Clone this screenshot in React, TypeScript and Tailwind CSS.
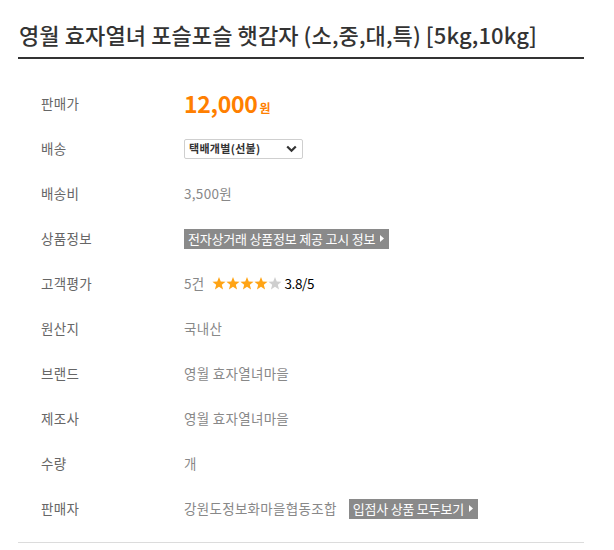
import React from 'react';

const font = { fontFamily: '"Noto Sans CJK KR", "Noto Sans", sans-serif' };

function Caret() {
  return (
    <svg className="ml-[5px] h-[7px] w-[4px]" viewBox="0 0 4 7" fill="white">
      <path d="M0 0 L4 3.5 L0 7 Z" />
    </svg>
  );
}

function Star({ on }: { on: boolean }) {
  return (
    <svg className="h-[13px] w-[14px]" viewBox="0 0 24 23" fill={on ? '#ffa415' : '#cfcfcf'}>
      <path d="M12 0 L15.1 8 L23.6 8.4 L17 13.8 L19.2 22.1 L12 17.4 L4.8 22.1 L7 13.8 L0.4 8.4 L8.9 8 Z" />
    </svg>
  );
}

function Badge({ label }: { label: string }) {
  return (
    <span className="inline-flex h-[20px] items-center bg-[#8a8a8a] pl-[4px] pr-[5px] text-[13px] tracking-[-0.2px] text-white">
      {label}
      <Caret />
    </span>
  );
}

export default function App() {
  const rows: { label: string; value: React.ReactNode }[] = [
    {
      label: '판매가',
      value: (
        <span className="flex items-baseline font-bold tracking-[-0.3px] text-[#ff7f00]">
          <span className="text-[23px]">12,000</span>
          <span className="ml-[2px] text-[12px]">원</span>
        </span>
      ),
    },
    {
      label: '배송',
      value: (
        <div className="flex h-[20px] w-[119px] items-center justify-between rounded-[2px] border border-[#cfcfcf] pl-[4px] pr-[5px]">
          <span className="text-[11px] font-bold tracking-[0.3px] text-[#333]">택배개별(선불)</span>
          <svg className="h-[8px] w-[11px]" viewBox="0 0 11 8" fill="none" stroke="#333" strokeWidth="2.2">
            <path d="M1.2 1.5 L5.5 5.8 L9.8 1.5" />
          </svg>
        </div>
      ),
    },
    { label: '배송비', value: '3,500원' },
    { label: '상품정보', value: <Badge label="전자상거래 상품정보 제공 고시 정보" /> },
    {
      label: '고객평가',
      value: (
        <span className="flex items-center">
          <span>5건</span>
          <span className="ml-[7px] flex">
            {[0, 1, 2, 3, 4].map((i) => (
              <Star key={i} on={i < 4} />
            ))}
          </span>
          <span className="ml-[3px] tracking-[-0.4px] text-black">3.8/5</span>
        </span>
      ),
    },
    { label: '원산지', value: '국내산' },
    { label: '브랜드', value: '영월 효자열녀마을' },
    { label: '제조사', value: '영월 효자열녀마을' },
    { label: '수량', value: '개' },
    {
      label: '판매자',
      value: (
        <span className="flex items-center">
          <span>강원도정보화마을협동조합</span>
          <span className="ml-[12px]">
            <Badge label="입점사 상품 모두보기" />
          </span>
        </span>
      ),
    },
  ];

  return (
    <div className="min-h-[550px] bg-white" style={font}>
      <div className="mx-[18px] w-[566px]">
        <h1 className="border-b-2 border-[#333] pl-[1px] pb-[9px] pt-[20px] text-[22px] font-medium leading-[28px] tracking-[0.1px] text-[#333]">
          영월 효자열녀 포슬포슬 햇감자 (소,중,대,특) [5kg,10kg]
        </h1>
        <div className="border-b border-[#dcdcdc] pb-[11px] pt-[22px]">
          {rows.map((row) => (
            <div key={row.label} className="flex h-[45px] items-center pl-[23px] text-[13.5px] tracking-[0.3px]">
              <div className="w-[143px] text-[#666]">{row.label}</div>
              <div className="text-[#888]">{row.value}</div>
            </div>
          ))}
        </div>
      </div>
    </div>
  );
}
